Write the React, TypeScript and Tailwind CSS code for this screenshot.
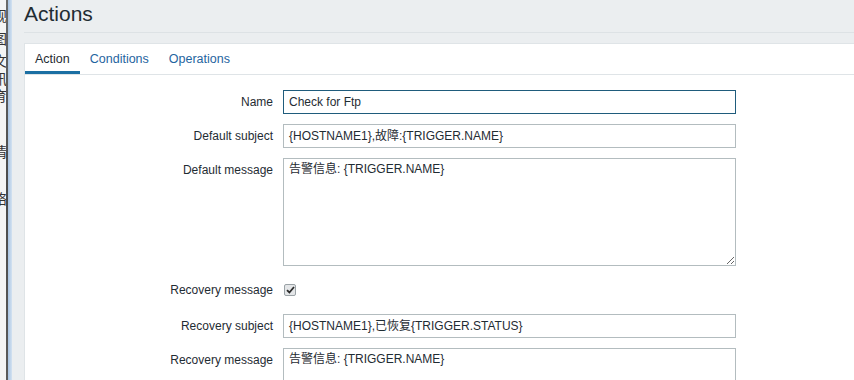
import React from "react";

const font = "font-['Liberation_Sans','Noto_Sans_CJK_SC',sans-serif]";

function Label({ children, top }: { children: React.ReactNode; top?: boolean }) {
  return (
    <div className={`w-[248px] shrink-0 text-right text-[12px] leading-[24px] text-[#1f2c33] ${top ? "self-start" : ""}`}>
      {children}
    </div>
  );
}

function Input({ value, focused }: { value: string; focused?: boolean }) {
  return (
    <div
      className={`ml-[10px] h-[24px] w-[453px] shrink-0 border bg-white pl-[5px] text-[12px] leading-[22px] text-[#1f2c33] ${
        focused ? "border-[#1f5c7c]" : "border-[#b3bcbf]"
      }`}
    >
      {value}
    </div>
  );
}

function Area({ value, h }: { value: string; h: string }) {
  return (
    <textarea
      readOnly
      defaultValue={value}
      className={`ml-[10px] ${h} w-[453px] shrink-0 resize border border-[#b3bcbf] bg-white px-[5px] pt-[2px] text-[12px] leading-[16px] text-[#1f2c33] outline-none ${font}`}
    />
  );
}

export default function App() {
  const sideChars: { c: string; mt: string }[] = [
    { c: "观", mt: "mt-[9px]" },
    { c: "图", mt: "mt-[9px]" },
    { c: "文", mt: "mt-[8px]" },
    { c: "讯", mt: "mt-[4px]" },
    { c: "育", mt: "mt-[3px]" },
    { c: "情", mt: "mt-[42px]" },
    { c: "络", mt: "mt-[33px]" },
  ];
  return (
    <div className={`flex h-[380px] w-[854px] overflow-hidden bg-[#ebeef0] ${font}`}>
      {/* cropped sidebar */}
      <div className="flex w-[12px] shrink-0">
        <div className="flex w-[6px] flex-col overflow-hidden bg-[#f4f4f4]">
          {sideChars.map((s) => (
            <div key={s.c} className={`${s.mt} ml-[-7px] h-[14px] shrink-0 text-[14px] leading-[14px] text-[#333]`}>
              {s.c}
            </div>
          ))}
        </div>
        <div className="w-[2px] bg-gradient-to-b from-[#6a6a6a] via-[#4a4a4a] to-[#5a5a5a]" />
        <div className="w-[4px] bg-gradient-to-r from-[#a9c4e2] to-[#d3e2f1]" />
      </div>

      {/* main */}
      <div className="flex min-w-0 flex-1 flex-col pl-[12px]">
        <div className="h-[33px] shrink-0 border-b border-[#dde2e5] text-[21px] leading-[28px] text-[#1f2c33]">
          Actions
        </div>
        <div className="mt-[10px] flex flex-1 shrink-0 flex-col border-l border-t border-[#dfe4e7] bg-white">
          {/* tabs */}
          <div className="flex h-[31px] shrink-0 border-b border-[#dfe4e7] text-[12.5px]">
            <div className="flex h-[30px] items-center px-[10px] text-[#1f2c33] shadow-[inset_0_-3px_0_#1b6fa3]">
              Action
            </div>
            <div className="flex h-[30px] items-center px-[10px] text-[#1f65a0]">Conditions</div>
            <div className="flex h-[30px] items-center px-[10px] text-[#1f65a0]">Operations</div>
          </div>

          {/* form */}
          <div className="flex shrink-0 flex-col gap-[10px] pt-[15px]">
            <div className="flex shrink-0 items-center">
              <Label>Name</Label>
              <Input value="Check for Ftp" focused />
            </div>
            <div className="flex shrink-0 items-center">
              <Label>Default subject</Label>
              <Input value="{HOSTNAME1},故障:{TRIGGER.NAME}" />
            </div>
            <div className="flex shrink-0">
              <Label top>Default message</Label>
              <Area value="告警信息: {TRIGGER.NAME}" h="h-[108px]" />
            </div>
            <div className="flex h-[28px] shrink-0 items-center">
              <Label>Recovery message</Label>
              <div className="ml-[11px] flex h-[12px] w-[12px] items-center justify-center rounded-[2px] border border-[#9aa2a6] bg-[#e4e6e8]">
                <svg width="9" height="8" viewBox="0 0 9 8">
                  <path d="M1 4.2 L3.4 6.5 L8 1" fill="none" stroke="#2b2b2b" strokeWidth="1.8" />
                </svg>
              </div>
            </div>
            <div className="flex shrink-0 items-center">
              <Label>Recovery subject</Label>
              <Input value="{HOSTNAME1},已恢复{TRIGGER.STATUS}" />
            </div>
            <div className="flex shrink-0">
              <Label top>Recovery message</Label>
              <Area value="告警信息: {TRIGGER.NAME}" h="h-[108px]" />
            </div>
          </div>
        </div>
      </div>
    </div>
  );
}
